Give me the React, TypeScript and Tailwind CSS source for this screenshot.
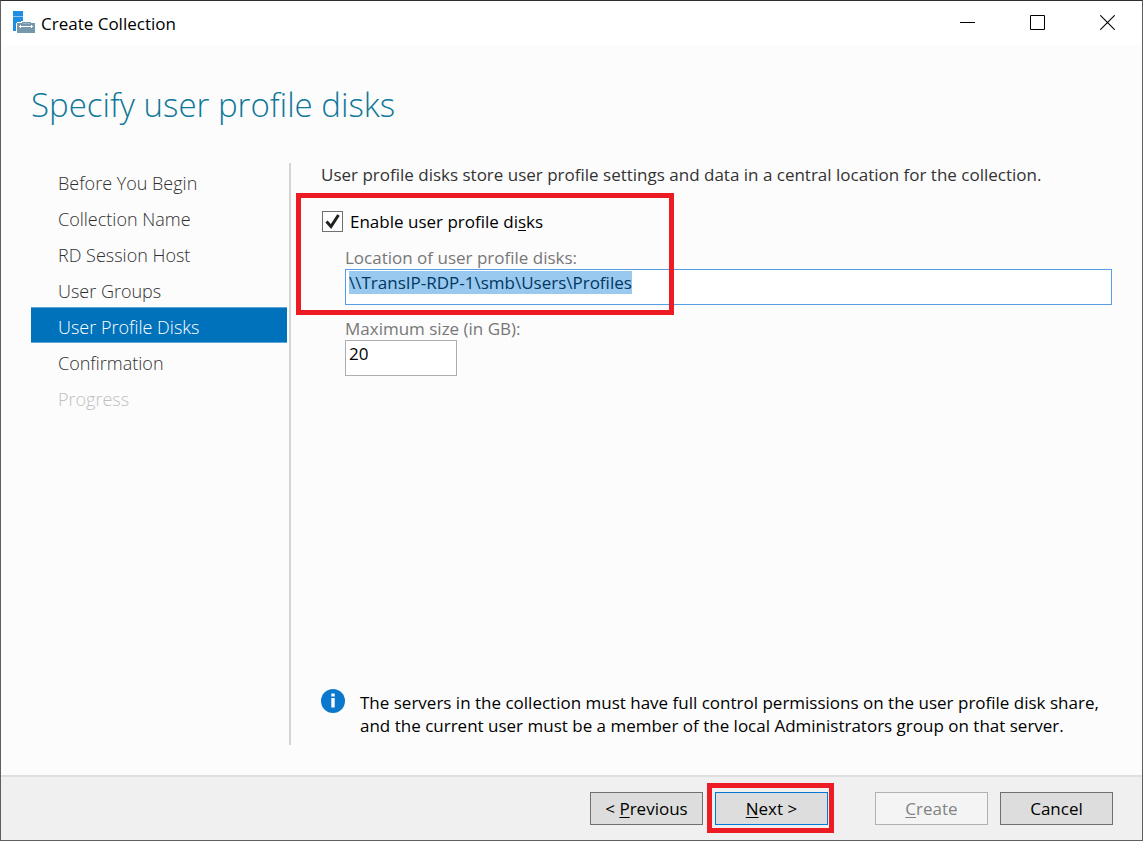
import { useEffect, useRef, useState } from "react";
import clsx from "clsx";

interface Step {
  label: string;
  state: "enabled" | "current" | "disabled";
}

const steps: Step[] = [
  { label: "Before You Begin", state: "enabled" },
  { label: "Collection Name", state: "enabled" },
  { label: "RD Session Host", state: "enabled" },
  { label: "User Groups", state: "enabled" },
  { label: "User Profile Disks", state: "current" },
  { label: "Confirmation", state: "enabled" },
  { label: "Progress", state: "disabled" },
];

const stepStyle: Record<Step["state"], string> = {
  enabled: "text-[#303030]",
  current: "bg-[#0072bc] text-white border-y border-[#5ba4d6]",
  disabled: "text-[#c0c0c0]",
};

const buttonBase = "h-[33px] w-[113px] border text-[17px] leading-[23px]";
const buttonStyle = "border-[#707070] bg-[#dddddd] text-black";

function ServerManagerIcon() {
  return (
    <svg width="22" height="24" viewBox="0 0 22 24" shapeRendering="crispEdges" aria-hidden="true">
      <path d="M0 0h10v20H0z" fill="#1e8fe0" />
      <path d="M0 5h10v1H0z" fill="#8cc7f1" />
      <path d="M3 12h1v-1h4v-1h10v1h4v11H4v-2H3z" fill="#fff" />
      <path d="M4 12h18v10H4zM9 11h9v1H9z" fill="#7797ab" />
      <path d="M10 12h7v1h-7z" fill="#9fb5c3" />
      <path d="M6 15h14v1H6zM7 14h1v3H7zM18 14h1v3h-1z" fill="#fff" />
    </svg>
  );
}

function InfoIcon() {
  return (
    <svg className="mt-0.5 shrink-0" width="24" height="24" viewBox="0 0 24 24" aria-hidden="true">
      <circle cx="12" cy="12" r="12" fill="#0a78cc" />
      <path d="M10.3 4.6h3.4v2.8h-3.4zM10.3 9h3.4v9.6h-3.4z" fill="#fff" />
    </svg>
  );
}

function TitleBar() {
  const control = "flex h-full w-[70px] items-center justify-center pb-px pl-px";
  return (
    <header className="flex h-11 items-center bg-white pl-3">
      <ServerManagerIcon />
      <span className="ml-1.5 flex-1 text-[17px] leading-[23px] text-black">Create Collection</span>
      <button type="button" aria-label="Minimize" className={control}>
        <svg width="15" height="15" viewBox="0 0 15 15">
          <path d="M0 7.5h15" stroke="#000" />
        </svg>
      </button>
      <button type="button" aria-label="Maximize" className={control}>
        <svg width="15" height="15" viewBox="0 0 15 15">
          <path d="M.5.5h14v14H.5z" stroke="#000" fill="none" />
        </svg>
      </button>
      <button type="button" aria-label="Close" className={control}>
        <svg width="15" height="15" viewBox="0 0 15 15">
          <path d="M.3.3l14.4 14.4M14.7.3L.3 14.7" stroke="#000" strokeWidth="1.1" />
        </svg>
      </button>
    </header>
  );
}

function StepList() {
  return (
    <nav className="w-64 shrink-0">
      <ol className="text-[18px] leading-6 font-light">
        {steps.map((step) => (
          <li key={step.label} className={clsx("flex h-9 items-center pl-[27px] pt-1", stepStyle[step.state])}>
            {step.state === "disabled" ? (
              <span>{step.label}</span>
            ) : (
              <a href="#" aria-current={step.state === "current" ? "step" : undefined}>
                {step.label}
              </a>
            )}
          </li>
        ))}
      </ol>
    </nav>
  );
}

function DiskSettings() {
  const [enabled, setEnabled] = useState(true);
  const [location, setLocation] = useState("\\\\TransIP-RDP-1\\smb\\Users\\Profiles");
  const [maxSize, setMaxSize] = useState("20");
  const locationRef = useRef<HTMLInputElement>(null);

  useEffect(() => {
    locationRef.current?.focus();
    locationRef.current?.select();
  }, []);

  return (
    <section className="flex min-w-0 flex-1 flex-col pl-[30px] text-[17px] leading-[23px]">
      <p className="text-[#333333]">
        User profile disks store user profile settings and data in a central location for the collection.
      </p>

      <div className="relative mt-6">
        <label className="flex w-fit items-center text-black">
          <span className="relative flex">
            <input
              type="checkbox"
              checked={enabled}
              onChange={(e) => setEnabled(e.target.checked)}
              className="ml-px size-[21px] appearance-none border border-[#707070] bg-white"
            />
            {enabled && (
              <svg
                className="pointer-events-none absolute top-0 left-px"
                width="21"
                height="21"
                viewBox="0 0 21 21"
                aria-hidden="true"
              >
                <path d="M4.5 10.5l4.5 5 7.5-11.5" stroke="#212121" strokeWidth="3" fill="none" />
              </svg>
            )}
          </span>
          <span className="ml-[7px]">
            Enable user profile di<span className="underline underline-offset-2">s</span>ks
          </span>
        </label>

        <div className="mt-[13px] pl-6">
          <label htmlFor="location" className="block w-fit text-[#777777]">
            Location of user profile disks:
          </label>
          <input
            id="location"
            ref={locationRef}
            value={location}
            onChange={(e) => setLocation(e.target.value)}
            className="block h-9 w-full border border-[#569de5] bg-white px-[3px] pb-2.5 text-black outline-none selection:bg-[#99c9ef] selection:text-[#003763]"
          />
        </div>

        {/* callout frame */}
        <div className="pointer-events-none absolute -top-[17px] -left-[25px] h-[122px] w-[378px] border-5 border-[#ed1c24]" />
      </div>

      <div className="mt-3 pl-6">
        <label htmlFor="max-size" className="block w-fit text-[#777777]">
          Maximum size (in GB):
        </label>
        <input
          id="max-size"
          value={maxSize}
          onChange={(e) => setMaxSize(e.target.value)}
          className="block h-9 w-28 border border-[#abadb3] bg-white px-[3px] pb-2.5 text-black outline-none"
        />
      </div>

      <div className="mt-auto flex gap-[15px] pb-2 text-black">
        <InfoIcon />
        <p className="pt-1">
          The servers in the collection must have full control permissions on the user profile disk share,
          and the current user must be a member of the local Administrators group on that server.
        </p>
      </div>
    </section>
  );
}

function WizardFooter() {
  return (
    <footer className="flex h-[65px] items-center justify-end border-t-2 border-[#dfdfdf] bg-[#f0f0f0] pr-[29px]">
      <button type="button" className={clsx(buttonBase, buttonStyle)}>
        &lt; <span className="underline underline-offset-2">P</span>revious
      </button>
      <div className="relative ml-3">
        <button type="button" className={clsx(buttonBase, "block border-[#0078d7] bg-[#dddddd] text-black")}>
          <span className="underline underline-offset-2">N</span>ext &gt;
        </button>
        <div className="pointer-events-none absolute -top-[9px] -right-1.5 -bottom-2 -left-2 border-5 border-[#ed1c24]" />
      </div>
      <button
        type="button"
        disabled
        className={clsx(buttonBase, "ml-[47px] border-[#adb2b5] bg-[#f4f4f4] text-[#838383]")}
      >
        <span className="underline underline-offset-2">C</span>reate
      </button>
      <button type="button" className={clsx(buttonBase, buttonStyle, "ml-3")}>
        Cancel
      </button>
    </footer>
  );
}

export default function App() {
  return (
    <div className="flex min-h-screen flex-col border border-[#5f5f5f] border-t-[#2f2d2f] bg-[#fcfcfc] font-['Open_Sans',sans-serif]">
      <TitleBar />
      <main className="flex flex-1 flex-col px-[30px] pt-9 pb-[30px]">
        <h1 className="mb-[34px] text-[33px] leading-12 font-light text-[#0f7799]">Specify user profile disks</h1>
        <div className="flex flex-1">
          <StepList />
          <div className="ml-0.5 w-0.5 bg-[#d5d5d5]" />
          <DiskSettings />
        </div>
      </main>
      <WizardFooter />
    </div>
  );
}
